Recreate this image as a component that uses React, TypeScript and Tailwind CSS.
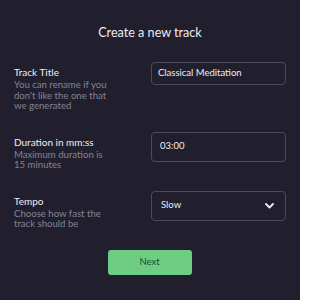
import React from "react";

export default function App() {
  return (
    <div className="w-[300px] h-[300px] bg-[#211f2d] text-white font-['Lato',sans-serif] overflow-hidden">
      <div className="pt-[23px] text-center text-[12.6px] leading-[20px] text-[#ecebf0]">Create a new track</div>
      <div className="mt-[19px] px-[14px] flex flex-col gap-[20px]">
        <div className="flex justify-between">
          <div className="pt-[3px] w-[100px]">
            <div className="text-[10px] leading-[14px] text-[#efeef3]">Track Title</div>
            <div className="mt-[1px] text-[9.6px] leading-[10.5px] text-[#858294]">You can rename if you don't like the one that we generated</div>
          </div>
          <div className="w-[135px] h-[23px] rounded-[4px] border border-[#4d4b5b] flex items-center px-[6px] text-[9.5px] text-[#efeef3]">Classical Meditation</div>
        </div>
        <div className="flex justify-between">
          <div className="pt-[3px] w-[100px]">
            <div className="text-[10px] leading-[14px] text-[#efeef3]">Duration in mm:ss</div>
            <div className="mt-[1px] text-[9.6px] leading-[10.5px] text-[#858294]">Maximum duration is 15 minutes</div>
          </div>
          <div className="w-[135px] h-[30px] rounded-[4px] border border-[#4d4b5b] flex items-center px-[8px] text-[9.5px] text-[#efeef3]">03:00</div>
        </div>
        <div className="flex justify-between">
          <div className="pt-[3px] w-[100px]">
            <div className="text-[10px] leading-[14px] text-[#efeef3]">Tempo</div>
            <div className="mt-[1px] text-[9.6px] leading-[10.5px] text-[#858294]">Choose how fast the track should be</div>
          </div>
          <div className="w-[135px] h-[30px] rounded-[4px] border border-[#4d4b5b] flex items-center justify-between pl-[9px] pr-[11px] text-[9.5px] text-[#efeef3]">
            <span>Slow</span>
            <svg width="9" height="6" viewBox="0 0 9 6" fill="none">
              <path d="M1 1l3.5 3.5L8 1" stroke="#efeef3" strokeWidth="1.8" strokeLinecap="round" strokeLinejoin="round" />
            </svg>
          </div>
        </div>
        <div className="flex justify-center">
          <button className="ml-[-1px] w-[84px] h-[25px] rounded-[3px] bg-[#6dcd85] text-[#1d4f2b] text-[9.5px]">Next</button>
        </div>
      </div>
    </div>
  );
}
